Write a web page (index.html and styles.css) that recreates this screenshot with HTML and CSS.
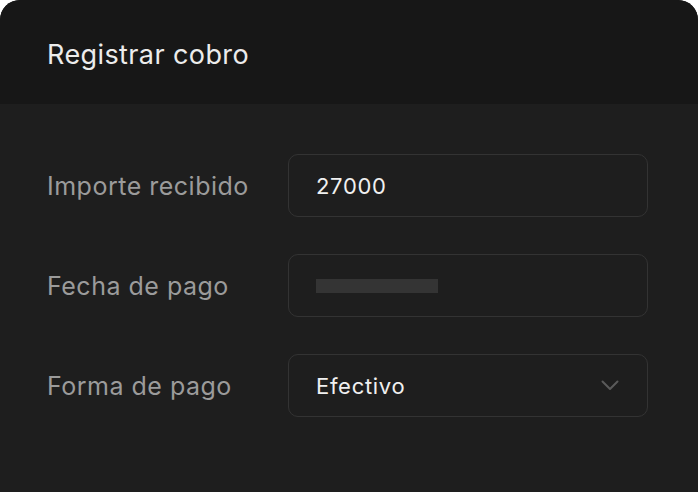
FILE: index.html
```html
<!DOCTYPE html>
<html lang="es">
<head>
<meta charset="utf-8">
<link rel="stylesheet" href="styles.css">
</head>
<body>
<div class="card">
  <div class="header"><h1 class="title">Registrar cobro</h1></div>
  <div class="form">
    <div class="row">
      <span class="label">Importe recibido</span>
      <div class="field"><span class="value">27000</span></div>
    </div>
    <div class="row">
      <span class="label">Fecha de pago</span>
      <div class="field"><span class="placeholder"></span></div>
    </div>
    <div class="row">
      <span class="label">Forma de pago</span>
      <div class="field select">
        <span class="value">Efectivo</span>
        <svg class="chev" width="18" height="11" viewBox="0 0 18 11"><path d="M1.5 1.5 L9 9 L16.5 1.5" fill="none" stroke="#5a5a5a" stroke-width="2" stroke-linecap="round" stroke-linejoin="round"/></svg>
      </div>
    </div>
  </div>
</div>
</body>
</html>
```
FILE: styles.css
```css
html, body { margin: 0; padding: 0; background: #ffffff; }
body { font-family: Inter, "Noto Sans", sans-serif; width: 698px; height: 492px; overflow: hidden; }
.card { width: 698px; height: 492px; background: #1e1e1e; border-radius: 20px 20px 0 0; overflow: hidden; }
.header { height: 104px; background: #171717; display: flex; align-items: center; padding: 4px 0 0 47px; box-sizing: border-box; }
.title { margin: 0; font-size: 27px; font-weight: 400; color: #ececec; letter-spacing: 0.4px; }
.form { padding: 50px 50px 0 47px; display: flex; flex-direction: column; gap: 37px; }
.row { display: flex; align-items: center; height: 63px; }
.label { width: 241px; font-size: 25px; color: #9b9b9b; letter-spacing: 0.5px; }
.field { box-sizing: border-box; width: 360px; height: 63px; border: 1.5px solid #333333; border-radius: 10px; display: flex; align-items: center; padding: 0 28px 0 27px; }
.value { font-size: 22px; color: #f0f0f0; letter-spacing: 0.7px; }
.placeholder { width: 122px; height: 14px; background: #343434; }
.select { justify-content: space-between; }
.chev { display: block; }
```
